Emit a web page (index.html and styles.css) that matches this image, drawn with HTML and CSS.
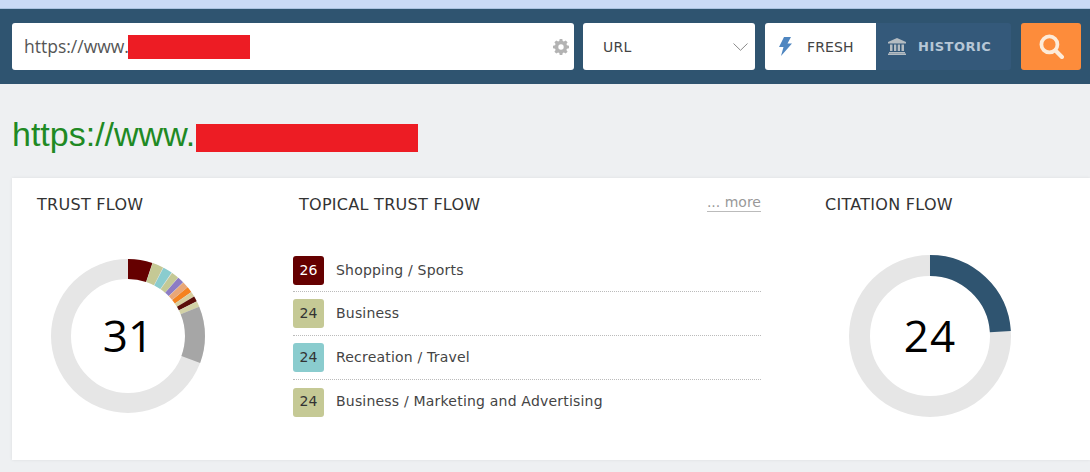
FILE: index.html
```html
<!DOCTYPE html>
<html lang="en">
<head>
<meta charset="utf-8">
<title>Site Explorer</title>
<link rel="stylesheet" href="styles.css">
</head>
<body>
<div class="topstrip"></div>
<header class="searchbar">
  <div class="box urlbox">
    <span class="urltext">https://www.</span><span class="redact redact-sm"></span>
    <svg class="gear" viewBox="0 0 16 16"><path fill="#b3b3b3" fill-rule="evenodd" d="M6.7 0h2.600l.4 2.100c.4.1.8.3 1.200.5l1.800-1.200 1.900 1.900-1.200 1.800c.2.4.4.8.5 1.200l2.100.4v2.600l-2.100.4c-.1.4-.3.8-.5 1.200l1.200 1.800-1.900 1.900-1.800-1.200c-.4.2-.8.4-1.200.5L9.300 16H6.700l-.4-2.100c-.4-.1-.8-.3-1.200-.5l-1.800 1.200-1.900-1.900 1.200-1.800c-.2-.4-.4-.8-.5-1.200L0 9.300V6.700l2.100-.4c.1-.4.3-.8.5-1.200L1.400 3.300l1.900-1.900 1.800 1.200c.4-.2.8-.4 1.200-.5zM8 5.300a2.700 2.700 0 1 0 0 5.400 2.700 2.700 0 0 0 0-5.400z"/></svg>
  </div>
  <div class="box selectbox">
    <span class="selecttext">URL</span>
    <svg class="chevron" viewBox="0 0 15 8"><path fill="none" stroke="#8a8a8a" stroke-width="1" d="M.5.5l7 6.800 7-6.800"/></svg>
  </div>
  <div class="toggle">
    <div class="toggle-on">
      <svg class="bolt" viewBox="0 0 14 19"><path fill="#4f86c0" d="M6 0h7L9.500 6.500H14L3 19l2.500-9H1z"/></svg>
      <span>FRESH</span>
    </div>
    <div class="toggle-off">
      <svg class="bank" viewBox="0 0 18 17"><path fill="#b4bcc2" d="M9 0l9 4v1.500H0V4zM2 6.500h2.500v6.500H2zM6 6.500h2.300v6.500H6zM9.700 6.500H12v6.500H9.700zM13.500 6.500H16v6.500h-2.500zM1 14h16v1.300H1zM0 15.600h18V17H0z"/></svg>
      <span>HISTORIC</span>
    </div>
  </div>
  <div class="searchbtn">
    <svg class="magnifier" viewBox="0 0 24 24"><circle cx="10" cy="10" r="7.700" fill="none" stroke="#fdebd9" stroke-width="3.600"/><path d="M15.800 15.800l6.200 6.200" stroke="#fdebd9" stroke-width="4" stroke-linecap="round"/></svg>
  </div>
</header>

<h1 class="pagetitle"><span class="pagetitle-text">https://www.</span><span class="redact redact-lg"></span></h1>

<main class="card">
  <section class="col col-trust">
    <h2 class="coltitle">TRUST FLOW</h2>
    <svg class="donut donut-trust" viewBox="0 0 154 154">
      <circle class="ring" cx="77" cy="77" r="67"/>
      <g class="segs" transform="rotate(-90 77 77)">
        <circle pathLength="360" cx="77" cy="77" r="67" stroke="#650000" stroke-dasharray="18.500 341.500"/>
        <circle pathLength="360" cx="77" cy="77" r="67" stroke="#c5c995" stroke-dasharray="8.300 351.700" stroke-dashoffset="-18.800"/>
        <circle pathLength="360" cx="77" cy="77" r="67" stroke="#8accce" stroke-dasharray="7 353" stroke-dashoffset="-27.500"/>
        <circle pathLength="360" cx="77" cy="77" r="67" stroke="#c5c995" stroke-dasharray="5.500 354.500" stroke-dashoffset="-35"/>
        <circle pathLength="360" cx="77" cy="77" r="67" stroke="#8c7cc4" stroke-dasharray="4.800 355.200" stroke-dashoffset="-40.800"/>
        <circle pathLength="360" cx="77" cy="77" r="67" stroke="#e9a777" stroke-dasharray="4.700 355.300" stroke-dashoffset="-45.900"/>
        <circle pathLength="360" cx="77" cy="77" r="67" stroke="#f5821f" stroke-dasharray="4.400 355.600" stroke-dashoffset="-50.800"/>
        <circle pathLength="360" cx="77" cy="77" r="67" stroke="#d8cf9e" stroke-dasharray="3.600 356.400" stroke-dashoffset="-55.400"/>
        <circle pathLength="360" cx="77" cy="77" r="67" stroke="#5c0f0a" stroke-dasharray="3.900 356.100" stroke-dashoffset="-59.200"/>
        <circle pathLength="360" cx="77" cy="77" r="67" stroke="#d3d2a6" stroke-dasharray="4.200 355.800" stroke-dashoffset="-63.400"/>
        <circle pathLength="360" cx="77" cy="77" r="67" stroke="#a6a6a6" stroke-dasharray="42.900 317.100" stroke-dashoffset="-67.600"/>
      </g>
      <text class="donut-num" x="77" y="93" text-anchor="middle">31</text>
    </svg>
  </section>

  <section class="col col-topical">
    <div class="topical-head">
      <h2 class="coltitle">TOPICAL TRUST FLOW</h2>
      <a class="more">... more</a>
    </div>
    <ul class="topics">
      <li class="topic"><span class="badge badge-maroon">26</span><span class="topic-label">Shopping / Sports</span></li>
      <li class="topic"><span class="badge badge-khaki">24</span><span class="topic-label">Business</span></li>
      <li class="topic"><span class="badge badge-teal">24</span><span class="topic-label">Recreation / Travel</span></li>
      <li class="topic"><span class="badge badge-khaki">24</span><span class="topic-label">Business / Marketing and Advertising</span></li>
    </ul>
  </section>

  <section class="col col-citation">
    <h2 class="coltitle">CITATION FLOW</h2>
    <svg class="donut donut-citation" viewBox="0 0 162 162">
      <circle class="ring ring-wide" cx="81" cy="81" r="70.500"/>
      <circle class="seg-blue" pathLength="360" cx="81" cy="81" r="70.500" stroke-dasharray="86.400 273.600" transform="rotate(-90 81 81)"/>
      <text class="donut-num donut-num-wide" x="81" y="97" text-anchor="middle">24</text>
    </svg>
  </section>
</main>
</body>
</html>
```
FILE: styles.css
```css
* { box-sizing: border-box; }
html, body { margin: 0; padding: 0; }
body {
  width: 1090px;
  height: 472px;
  overflow: hidden;
  background: #eef0f2;
  font-family: "DejaVu Sans", Verdana, sans-serif;
  color: #333;
}
.topstrip {
  height: 9px;
  background: #c9daf6;
  border-bottom: 1px solid #a9c2e0;
}
.searchbar {
  display: flex;
  height: 75px;
  padding: 14px 9px 14px 12px;
  background: #2f5470;
}
.box {
  display: flex;
  align-items: center;
  height: 47px;
  background: #fff;
  border-radius: 3px;
}
.urlbox {
  width: 562px;
  padding: 0 5px 0 12px;
  font-family: "Open Sans", sans-serif;
  font-size: 17.500px;
  color: #555;
}
.redact { display: inline-block; background: #ed1c24; }
.redact-sm { width: 122px; height: 24px; }
.urltext { width: 104px; white-space: nowrap; margin-bottom: 2px; }
.gear { width: 16px; height: 16px; margin-left: auto; }
.selectbox {
  width: 172px;
  margin-left: 9px;
  padding: 0 7px 0 20px;
  font-size: 14px;
  letter-spacing: .3px;
  color: #444;
}
.chevron { width: 15px; height: 8px; margin-left: auto; }
.toggle { display: flex; margin-left: 10px; height: 47px; font-size: 14px; }
.toggle-on {
  display: flex;
  align-items: center;
  width: 111px;
  padding-left: 13px;
  background: #fff;
  border-radius: 3px 0 0 3px;
  color: #444;
  letter-spacing: .1px;
}
.bolt { width: 14px; height: 19px; margin-right: 15px; }
.toggle-off {
  display: flex;
  align-items: center;
  width: 135px;
  padding-left: 12px;
  background: #34597a;
  border-radius: 0 3px 3px 0;
  color: #b7c7d6;
  font-weight: bold;
  font-size: 13px;
  letter-spacing: .5px;
}
.bank { width: 18px; height: 17px; margin-right: 12px; }
.searchbtn {
  display: flex;
  align-items: center;
  justify-content: center;
  width: 60px;
  height: 47px;
  margin-left: 10px;
  background: #fd8c3b;
  border-radius: 3px;
}
.magnifier { width: 25px; height: 25px; }
.pagetitle {
  display: flex;
  align-items: center;
  height: 28px;
  margin: 40px 0 26px 12px;
  font-family: "Liberation Sans", Arial, sans-serif;
  font-weight: normal;
  font-size: 34px;
  color: #1f8a24;
}
.pagetitle-text { width: 184px; white-space: nowrap; margin-bottom: 8px; }
.redact-lg { width: 222px; height: 28px; }
.card {
  display: flex;
  width: 1078px;
  height: 282px;
  margin-left: 12px;
  background: #fff;
  box-shadow: 0 0 3px rgba(0,0,0,.08);
}
.col { display: flex; flex-direction: column; }
.coltitle {
  margin: 1px 0 -1px;
  font-size: 16px;
  font-weight: normal;
  line-height: 20px;
  letter-spacing: .28px;
  color: #333;
}
.col-trust { width: 281px; padding: 16px 0 0 25px; }
.donut-trust { width: 154px; height: 154px; margin: 45px 0 0 14px; }
.ring { fill: none; stroke: #e6e6e6; stroke-width: 20; }
.ring-wide { stroke-width: 21; }
.segs circle { fill: none; stroke-width: 20; }
.seg-blue { fill: none; stroke: #2f5470; stroke-width: 21; }
.donut-num {
  font-family: "Open Sans", sans-serif;
  font-size: 44px;
  fill: #000;
}
.donut-num-wide { letter-spacing: 1px; }
.col-topical { width: 468px; padding-top: 16px; }
.topical-head {
  display: flex;
  justify-content: space-between;
  align-items: flex-start;
  padding-left: 6px;
}
.more {
  font-size: 14px;
  line-height: 17px;
  color: #999;
  border-bottom: 1px solid #bbb;
}
.topics {
  list-style: none;
  margin: 34px 0 0;
  padding: 0;
}
.topic {
  display: flex;
  align-items: center;
  height: 44px;
  font-size: 14px;
  letter-spacing: .2px;
  color: #444;
  border-bottom: 1px dotted #bbb;
}
.topic:first-child { padding-top: 2px; }
.topic:last-child { border-bottom: 0; }
.topic-label { margin-bottom: 2px; }
.badge {
  display: flex;
  align-items: center;
  justify-content: center;
  width: 31px;
  height: 29px;
  margin-right: 12px;
  padding-bottom: 2px;
  border-radius: 3px;
}
.badge-maroon { background: #650000; color: #fff; }
.badge-khaki { background: #c5c995; color: #333; }
.badge-teal { background: #8accce; color: #333; }
.col-citation { padding: 16px 0 0 64px; }
.donut-citation { width: 162px; height: 162px; margin: 41px 0 0 24px; }
```
